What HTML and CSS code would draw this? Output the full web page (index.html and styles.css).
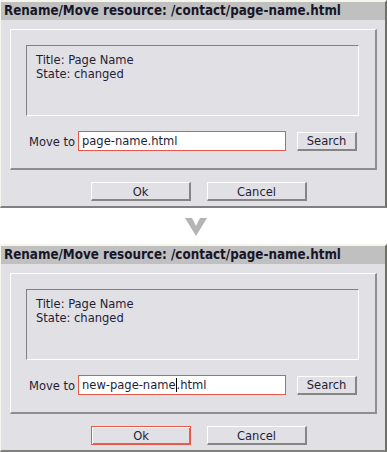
FILE: index.html
```html
<!DOCTYPE html>
<html lang="en">
<head>
  <meta charset="UTF-8" />
  <title>Rename/Move resource</title>
  <link rel="stylesheet" href="styles.css">
</head>
<body>
  <div class="dialog">
    <div class="titlebar">Rename/Move resource: /contact/page-name.html</div>
    <div class="group">
      <div class="info">Title: Page Name<br>State: changed</div>
      <div class="move-row">
        <label>Move to</label>
        <div class="field">page-name.html</div>
        <button class="btn btn-search">Search</button>
      </div>
    </div>
    <div class="actions">
      <button class="btn">Ok</button>
      <button class="btn">Cancel</button>
    </div>
  </div>

  <div class="arrow">
    <svg width="22" height="18" viewBox="0 0 22 18"><polygon points="0,0 7,0 11,8 15,0 22,0 11,18" fill="#b4b4b4"/></svg>
  </div>

  <div class="dialog">
    <div class="titlebar">Rename/Move resource: /contact/page-name.html</div>
    <div class="group">
      <div class="info">Title: Page Name<br>State: changed</div>
      <div class="move-row">
        <label>Move to</label>
        <div class="field">new-page-name<span class="caret"></span>.html</div>
        <button class="btn btn-search">Search</button>
      </div>
    </div>
    <div class="actions">
      <button class="btn focused">Ok</button>
      <button class="btn">Cancel</button>
    </div>
  </div>
</body>
</html>
```

FILE: styles.css
```css
body {
  margin: 0;
  background: #fff;
  font-family: "DejaVu Sans Condensed", "DejaVu Sans", sans-serif;
  font-size: 12.8px;
  color: #1e1e38;
}
.dialog {
  box-sizing: border-box;
  height: 208px;
  background: #e1e0e5;
  border-top: 2px solid #f6f5ec;
  border-left: 1px solid #f6f5ec;
  border-right: 2px solid #6f7168;
  border-bottom: 2px solid #808080;
}
.titlebar {
  height: 18px;
  line-height: 18px;
  background: #c0c0c0;
  padding-left: 3px;
  font-weight: bold;
  font-size: 13.3px;
  color: #161628;
  white-space: nowrap;
}
.group {
  box-sizing: border-box;
  width: 367px;
  height: 141px;
  margin: 9px 0 0 9px;
  padding: 15px 0 0 15px;
  border-top: 1px solid #fff;
  border-left: 1px solid #fff;
  border-right: 2px solid #8e8e8e;
  border-bottom: 2px solid #8e8e8e;
}
.info {
  box-sizing: border-box;
  width: 333px;
  height: 71px;
  padding: 7px 0 0 9px;
  line-height: 14px;
  border-top: 1px solid #808080;
  border-left: 1px solid #808080;
  border-right: 1px solid #fff;
  border-bottom: 1px solid #fff;
}
.move-row {
  display: flex;
  align-items: center;
  margin-top: 15px;
  padding-left: 3px;
}
.move-row label {
  flex: 0 0 49px;
}
.field {
  box-sizing: border-box;
  width: 208px;
  height: 20px;
  line-height: 18px;
  padding-left: 3px;
  background: #fff;
  border: 1px solid #e5584a;
  margin-right: 11px;
  white-space: nowrap;
}
.caret {
  display: inline-block;
  width: 1px;
  height: 14px;
  background: #000;
  vertical-align: -3px;
}
.btn {
  box-sizing: border-box;
  height: 19px;
  padding: 0;
  background: #e1e0e5;
  font-family: inherit;
  font-size: 12.8px;
  line-height: 15px;
  color: #1e1e38;
  border-top: 1px solid #fff;
  border-left: 1px solid #fff;
  border-right: 2px solid #858585;
  border-bottom: 2px solid #858585;
}
.btn-search {
  width: 60px;
}
.actions {
  display: flex;
  gap: 16px;
  margin: 12px 0 0 90px;
}
.actions .btn {
  width: 100px;
}
.actions .focused {
  border: 1px solid #e5584a;
  box-shadow: inset 1px 1px 0 #fff, inset -1px -1px 0 #858585;
}
.arrow {
  height: 36px;
  display: flex;
  justify-content: center;
  align-items: flex-start;
  padding-left: 5px;
  box-sizing: border-box;
  padding-top: 10px;
}
.arrow svg {
  display: block;
}
```
